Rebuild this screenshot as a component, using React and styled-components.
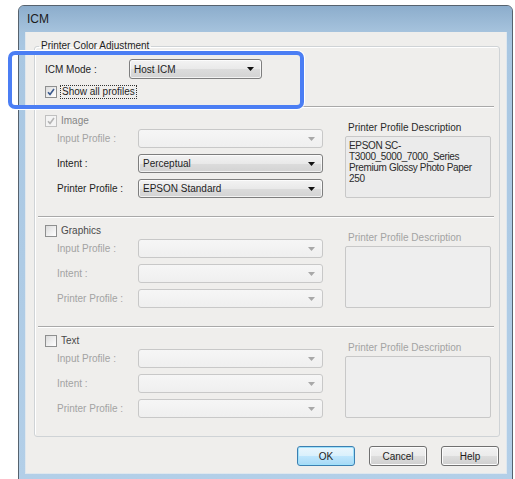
import React from 'react';
import styled, { createGlobalStyle, css } from 'styled-components';

const GlobalStyle = createGlobalStyle`
  html, body {
    margin: 0;
    padding: 0;
    background: #ffffff;
  }
  body {
    font-family: "Liberation Sans", Arial, sans-serif;
    font-size: 10px;
    color: #1e1e1e;
  }
`;

const Page = styled.div`
  padding: 5px 0 0 18px;
`;

const Window = styled.div`
  position: relative;
  width: 495px;
  box-sizing: border-box;
  border: 1px solid #56626e;
  border-radius: 6px 6px 0 0;
  background: linear-gradient(to bottom, #9dbcd8 0px, #a9c7e2 40px, #b3cfe8 100%);
`;

const TitleBar = styled.div`
  height: 26px;
  display: flex;
  align-items: center;
  padding-left: 8px;
  font-size: 12px;
  color: #1b1b1b;
  border-radius: 5px 5px 0 0;
  background: linear-gradient(to bottom, #8cadcc, #a6c3dd);
`;

const Client = styled.div`
  margin: 0 5px 7px 6px;
  padding: 8px 6px 7px 8px;
  background: #efeeec;
  border: 1px solid #dfe7ee;
  border-top: none;
`;

const GroupBox = styled.fieldset`
  margin: 0;
  padding: 0;
  min-width: 0;
  border: 1px solid #cfd3d6;
  border-radius: 3px;
  box-shadow: inset 1px 1px 0 #ffffff;
`;

const Legend = styled.legend`
  margin-left: 4px;
  padding: 0 2px;
  line-height: 12px;
  color: #1e1e1e;
`;

const TopBlock = styled.div`
  padding: 7px 0 0 10px;
`;

const ModeRow = styled.div`
  display: flex;
  align-items: center;
  height: 20px;
`;

const ModeLabel = styled.span`
  width: 84px;
`;

const ShowRow = styled.div`
  display: flex;
  align-items: center;
  height: 14px;
  margin-top: 6px;
  gap: 3px;
`;

const FocusText = styled.span`
  border: 1px dotted #333;
  padding: 0 1px;
  line-height: 12px;
`;

const Separator = styled.div`
  margin: ${({ $top }) => $top || 0}px 5px 0 3px;
  height: 1px;
  background: #a9a9a9;
  border-bottom: 1px solid #ffffff;
`;

const Section = styled.div`
  display: grid;
  grid-template-columns: 278px 146px;
  column-gap: 22px;
  padding: 6px 0 18px 10px;
`;

const LeftCol = styled.div`
  display: flex;
  flex-direction: column;
`;

const CheckRow = styled.div`
  display: flex;
  align-items: center;
  height: 13px;
  gap: 4px;
  color: ${({ $disabled }) => ($disabled ? '#858585' : '#4a4a4a')};
`;

const Rows = styled.div`
  display: flex;
  flex-direction: column;
  gap: 6px;
  margin-top: 2px;
`;

const Row = styled.div`
  display: flex;
  align-items: center;
  height: 19px;
`;

const RowLabel = styled.span`
  width: 81px;
  padding-left: 12px;
  color: ${({ $disabled }) => ($disabled ? '#a3a3a3' : '#1e1e1e')};
`;

const RightCol = styled.div`
  display: flex;
  flex-direction: column;
  padding-top: 8px;
`;

const DescLabel = styled.div`
  line-height: 12px;
  padding-left: 3px;
  margin-bottom: 2px;
  color: ${({ $disabled }) => ($disabled ? '#a3a3a3' : '#2a2a2a')};
`;

const DescBox = styled.div`
  flex: 1;
  padding: 3px 3px;
  border: 1px solid #c8c8c8;
  border-radius: 2px;
  background: ${({ $disabled }) => ($disabled ? '#eeeeee' : '#ebebeb')};
  color: #2a2a2a;
  line-height: 11px;
  letter-spacing: -0.35px;
  white-space: pre;
`;

const SelectBox = styled.div`
  position: relative;
  box-sizing: border-box;
  width: ${({ $width }) => $width}px;
  height: ${({ $height }) => $height}px;
  display: flex;
  align-items: center;
  padding-left: 4px;
  border-radius: 3px;
  ${({ $disabled }) =>
    $disabled
      ? css`
          border: 1px solid #c8c8c8;
          background: linear-gradient(to bottom, #f6f6f6, #efefef);
        `
      : css`
          border: 1px solid #7e7e7e;
          background: linear-gradient(to bottom, #f3f3f3 0%, #e9e9e9 50%, #dcdcdc 51%, #d3d3d3 100%);
          box-shadow: inset 0 0 0 1px rgba(255, 255, 255, 0.7);
        `}
`;

const Arrow = styled.svg`
  position: absolute;
  right: 7px;
  top: 50%;
  transform: translateY(-50%);
`;

const CheckBox = styled.span`
  box-sizing: border-box;
  width: 12px;
  height: 12px;
  display: inline-flex;
  align-items: center;
  justify-content: center;
  border: 1px solid ${({ $disabled }) => ($disabled ? '#c0c0c0' : '#8e8f8f')};
  background: ${({ $disabled }) =>
    $disabled ? '#f4f4f4' : 'linear-gradient(135deg, #dcdcdc, #ffffff)'};
`;

const ButtonRow = styled.div`
  display: flex;
  justify-content: flex-end;
  gap: 14px;
  margin-top: 9px;
  padding-right: 1px;
`;

const Button = styled.div`
  box-sizing: border-box;
  width: 58px;
  height: 20px;
  display: flex;
  align-items: center;
  justify-content: center;
  border-radius: 3px;
  color: #1e1e1e;
  ${({ $primary }) =>
    $primary
      ? css`
          border: 1px solid #3c7fb1;
          background: linear-gradient(to bottom, #eaf6fd 0%, #d9f0fc 50%, #bee6fd 51%, #a7d9f5 100%);
          box-shadow: inset 0 0 0 1px #9fe1fb;
        `
      : css`
          border: 1px solid #707070;
          background: linear-gradient(to bottom, #f2f2f2 0%, #ebebeb 50%, #dddddd 51%, #cfcfcf 100%);
          box-shadow: inset 0 0 0 1px #fcfcfc;
        `}
`;

const Highlight = styled.div`
  position: absolute;
  left: -11px;
  top: 45px;
  width: 296px;
  height: 58px;
  box-sizing: border-box;
  border: 4px solid #4b7ef4;
  border-radius: 7px;
  box-shadow: 0 0 0 1px #ffffff;
  pointer-events: none;
`;

const Select = ({ value, disabled, width = 185, height = 19 }) => (
  <SelectBox $disabled={disabled} $width={width} $height={height}>
    {value}
    <Arrow width="7" height="4" viewBox="0 0 7 4">
      <path d="M0 0 H7 L3.5 4 Z" fill={disabled ? '#a8a8a8' : '#111'} />
    </Arrow>
  </SelectBox>
);

const Check = ({ checked, disabled }) => (
  <CheckBox $disabled={disabled}>
    {checked && (
      <svg width="8" height="8" viewBox="0 0 8 8">
        <path
          d="M1 4.2 L3 6.4 L7 1"
          fill="none"
          stroke={disabled ? '#b4b4b4' : '#3b5a8e'}
          strokeWidth="1.6"
        />
      </svg>
    )}
  </CheckBox>
);

// Image is locked on while Host ICM is selected; the others can be toggled
const sections = [
  {
    name: 'Image',
    checked: true,
    locked: true,
    enabled: true,
    intent: 'Perceptual',
    profile: 'EPSON Standard',
    description: 'EPSON SC-\nT3000_5000_7000_Series\nPremium Glossy Photo Paper\n250',
  },
  { name: 'Graphics', checked: false, locked: false, enabled: false },
  { name: 'Text', checked: false, locked: false, enabled: false },
];

const ProfileSection = ({ name, checked, locked, enabled, intent, profile, description }) => (
  <Section>
    <LeftCol>
      <CheckRow $disabled={locked}>
        <Check checked={checked} disabled={locked} />
        {name}
      </CheckRow>
      <Rows>
        <Row>
          <RowLabel $disabled>Input Profile :</RowLabel>
          <Select disabled />
        </Row>
        <Row>
          <RowLabel $disabled={!enabled}>Intent :</RowLabel>
          <Select value={intent} disabled={!enabled} />
        </Row>
        <Row>
          <RowLabel $disabled={!enabled}>Printer Profile :</RowLabel>
          <Select value={profile} disabled={!enabled} />
        </Row>
      </Rows>
    </LeftCol>
    <RightCol>
      <DescLabel $disabled={!enabled}>Printer Profile Description</DescLabel>
      <DescBox $disabled={!enabled}>{description}</DescBox>
    </RightCol>
  </Section>
);

const App = () => (
  <Page>
    <GlobalStyle />
    <Window>
      <TitleBar>ICM</TitleBar>
      <Client>
        <GroupBox>
          <Legend>Printer Color Adjustment</Legend>
          <TopBlock>
            <ModeRow>
              <ModeLabel>ICM Mode :</ModeLabel>
              <Select value="Host ICM" width={133} height={20} />
            </ModeRow>
            <ShowRow>
              <Check checked />
              <FocusText>Show all profiles</FocusText>
            </ShowRow>
          </TopBlock>
          <Separator $top={7} />
          {sections.map((s, i) => (
            <React.Fragment key={s.name}>
              {i > 0 && <Separator />}
              <ProfileSection {...s} />
            </React.Fragment>
          ))}
        </GroupBox>
        <ButtonRow>
          <Button $primary>OK</Button>
          <Button>Cancel</Button>
          <Button>Help</Button>
        </ButtonRow>
      </Client>
      <Highlight />
    </Window>
  </Page>
);

export default App;
